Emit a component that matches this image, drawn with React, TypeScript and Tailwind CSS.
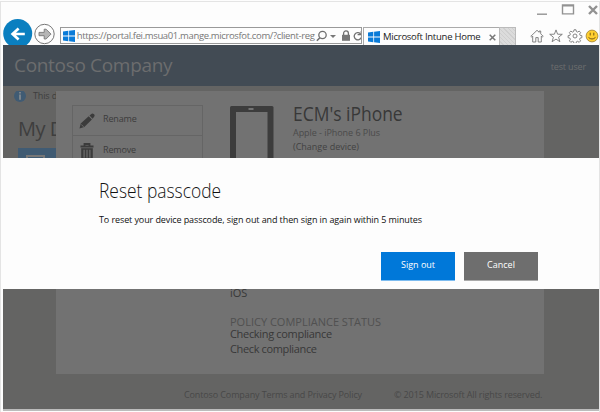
import React from "react";

const WindowsLogo = () => (
  <svg width="12" height="12" viewBox="0 0 12 12" className="shrink-0" fill="#0a7bd8">
    <path d="M0 1.5 5.3.8v4.8H0zM6.1.7 12 0v5.6H6.1zM0 6.4h5.3v4.8L0 10.5zM6.1 6.4H12V12l-5.9-.8z" />
  </svg>
);

const BackForward = () => (
  <svg width="57" height="28" viewBox="0 0 57 28" className="shrink-0">
    <circle cx="14.7" cy="14.5" r="14.5" fill="#0a7fc0" />
    <path d="M21.8 15h-11M15.6 9.4 9.6 15l6 5.6" fill="none" stroke="#fff" strokeWidth="2.7" />
    <circle cx="41.5" cy="15" r="9.7" fill="#fdfdfd" stroke="#777" strokeWidth="1" />
    <path d="M36 13.4h5.2v-3.2h1.9l4.9 4.9-4.9 4.9h-1.9v-3.3H36z" fill="#b5b5b5" stroke="#777" strokeWidth=".9" />
  </svg>
);

const WindowControls = () => (
  <svg width="64" height="14" viewBox="0 0 64 14" fill="none" stroke="#929292" className="shrink-0">
    <path d="M2 12.2h10" strokeWidth="1.4" />
    <path d="M27.5 3.7h11v8.2h-11zM26.8 3h12.4" strokeWidth="1.4" />
    <path d="m54 4 8 8m0-8-8 8" strokeWidth="2.4" />
  </svg>
);

const AddressTools = () => (
  <svg width="48" height="15" viewBox="0 0 48 15" fill="none" stroke="#707070" className="shrink-0">
    <circle cx="6.5" cy="7" r="3.7" strokeWidth="1.3" />
    <path d="m3.9 9.7-3 3" strokeWidth="1.6" />
    <path d="M14 7h6l-3 3z" fill="#777" stroke="none" />
    <path d="M26 6.8h8v6h-8z" fill="#777" stroke="none" />
    <path d="M27.6 7V5.3a2.4 2.4 0 0 1 4.8 0V7" strokeWidth="1.3" />
    <path d="M44.4 5.7A3.6 3.6 0 1 0 45.2 9.5M45.3 3v3.6h-3.7" strokeWidth="1.3" />
  </svg>
);

const BrowserIcons = () => (
  <svg width="69" height="14" viewBox="0 0 69 14" fill="none" stroke="#777" strokeWidth=".9" className="shrink-0">
    <path d="M.8 7.3 7 1.3l2.2 2V2h1.5v2.8l2.5 2.5-.9.8-1-1V13H8.2V8.6H5.8V13H2.7V7.1l-1 1z" />
    <path d="m26 .9 1.6 4.3 4.7.1-3.7 2.9 1.3 4.5L26 10.1l-3.9 2.6 1.3-4.5-3.7-2.9 4.7-.1z" />
    <circle cx="45" cy="7" r="2" />
    <path d="m44 .8 2 0 .4 1.8 1.2.5 1.6-1 1.4 1.4-1 1.6.5 1.2 1.8.4v2l-1.8.4-.5 1.2 1 1.6-1.4 1.4-1.6-1-1.2.5-.4 1.7h-2l-.4-1.7-1.2-.5-1.6 1-1.4-1.4 1-1.6-.5-1.2-1.8-.4v-2l1.8-.4.5-1.2-1-1.6 1.4-1.4 1.6 1 1.2-.5z" />
    <circle cx="62" cy="7" r="5.9" fill="#ffcf2f" stroke="#a98a3a" />
    <path d="M60.2 3.7v2.8M63.8 3.7v2.8M58.5 8.4q3.5 3.2 7 0" stroke="#765812" strokeWidth="1" />
  </svg>
);

const Pencil = () => (
  <svg width="16" height="16" viewBox="0 0 16 16" fill="#3b3b3b" className="shrink-0">
    <path d="M.5 15.5 1.7 10.6 9.7 3.3l3.2 3.3-7.6 7.5zM10.5 2.6 12.7.7q1-.7 2 .2l.6.7q.7.9 0 1.8L13.6 5.8z" />
    <path d="m2.2 11.4 2.5 2.5" stroke="#727272" strokeWidth=".8" />
  </svg>
);

const Trash = () => (
  <svg width="14" height="17" viewBox="0 0 14 17" fill="none" stroke="#3b3b3b" className="shrink-0">
    <path d="M.5 3.5h13M4.5 3V1h5v2" strokeWidth="1.8" />
    <path d="M1.2 5.2h11.6v11H1.2z" fill="#3b3b3b" stroke="none" />
    <path d="M4.1 6.8v8M7 6.8v8M9.9 6.8v8" stroke="#727272" strokeWidth="1.1" />
  </svg>
);

const Phone = () => (
  <svg width="44" height="80" viewBox="0 0 44 80" className="shrink-0">
    <rect width="43.5" height="80" rx="1.5" fill="#3c3c3c" />
    <rect x="6" y="6" width="31.5" height="68" fill="#727272" />
    <rect x="18.5" y="2.3" width="5" height="1.4" fill="#8a8a8a" />
  </svg>
);

function BrowserChrome() {
  return (
    <div className="h-[43px] bg-[#fdfdfd] text-[#333]">
      <div className="flex h-[17px] justify-end">
        <WindowControls />
      </div>
      <div className="flex h-[26px]">
        <div className="h-[27px] w-[57px] overflow-hidden">
          <BackForward />
        </div>
        <div className="mt-2 flex h-[17px] w-[303px] items-center overflow-hidden border border-[#999] pl-[2px]">
          <WindowsLogo />
          <span className="ml-0.5 w-[239px] shrink-0 whitespace-nowrap text-[9.5px] leading-3 tracking-[-0.36px] text-[#777]">
            https://portal.fei.msua01.mange.microsfot.com/?client-reg
          </span>
          <AddressTools />
        </div>
        <div className="ml-px mt-2 flex h-[18px] w-[136px] shrink-0 items-center border-l border-t border-[#aaa] pl-1">
          <WindowsLogo />
          <span className="ml-[3px] w-[106px] shrink-0 whitespace-nowrap text-[9.5px] leading-3 tracking-[-0.25px] text-[#222]">
            Microsoft Intune Home
          </span>
          <svg width="7" height="7" viewBox="0 0 7 7" stroke="#777" strokeWidth="1.5" className="mt-0.5 shrink-0">
            <path d="m.7.7 5.6 5.6m0-5.6L.7 6.3" />
          </svg>
        </div>
        <div className="mt-2 h-[18px] w-[17px] shrink-0 border border-b-0 border-[#bbb] bg-[repeating-linear-gradient(45deg,#dcdcdc_0_2px,#cfcfcf_2px_3px)]" />
        <div className="ml-3.5 mt-2.5 shrink-0">
          <BrowserIcons />
        </div>
      </div>
    </div>
  );
}

function DevicePanel() {
  return (
    <section className="flex h-[283px] w-[488px] bg-[#727272] pl-4 pt-[14px]">
      <div className="h-[120px] w-[131px] border border-[#656565] text-[9px] tracking-[-0.15px] text-[#3c3c3c]">
        <div className="flex h-[30px] items-center border-b border-[#656565] pl-1.5">
          <Pencil />
          <span className="ml-2 -mt-1">Rename</span>
        </div>
        <div className="flex h-[30px] items-center pl-[7px]">
          <Trash />
          <span className="-mt-0.5 ml-[9px]">Remove</span>
        </div>
      </div>
      <div className="ml-[27px] flex flex-col">
        <div className="flex h-[180px] pt-px">
          <Phone />
          <div className="ml-[19px] whitespace-nowrap">
            <h2 className="-mt-[3px] origin-left scale-x-[.895] text-[19.5px] leading-[22px] text-[#383838]">ECM's iPhone</h2>
            <p className="mt-px text-[9px] leading-[14px] tracking-[-0.05px] text-[#4a4a4a]">Apple - iPhone 6 Plus</p>
            <p className="text-[9px] leading-[14px] text-[#424242]">(Change device)</p>
          </div>
        </div>
        <div className="whitespace-nowrap text-[11px] text-[#383838]">
          <p className="leading-[16px]">iOS</p>
          <p className="mt-[13px] leading-[16px] text-[#505050]">POLICY COMPLIANCE STATUS</p>
          <p className="-mt-0.5 leading-[12px] tracking-[-0.32px]">Checking compliance</p>
          <p className="mt-px leading-[16px] tracking-[-0.36px]">Check compliance</p>
        </div>
      </div>
    </section>
  );
}

function ResetDialog() {
  return (
    <div role="dialog" className="absolute inset-x-0 top-[113px] h-[131px] bg-[#fdfdfd] pl-24 pr-[61px] pt-5 text-[#111]">
      <h1 className="origin-left scale-x-[.87] whitespace-nowrap text-[20px] font-light leading-[26px]">Reset passcode</h1>
      <p className="mt-[9px] whitespace-nowrap text-[9px] leading-[14px] tracking-[-0.1px]">
        To reset your device passcode, sign out and then sign in again within 5 minutes
      </p>
      <div className="mt-[25px] flex justify-end gap-[9px] text-[9px] text-white">
        <button className="h-[29px] w-[74px] border-b border-[#7dbcf0] bg-[#0078d9] pb-0.5">Sign out</button>
        <button className="h-[29px] w-[74px] border-b border-[#aaa] bg-[#6e6e6e] pb-0.5">Cancel</button>
      </div>
    </div>
  );
}

export default function App() {
  return (
    <div className="h-[412px] w-[600px] overflow-hidden bg-[#fdfdfd] pt-px font-['Open_Sans','Noto_Sans',sans-serif]">
      <div className="h-[411px] border-x border-t border-[#e4e4e4] pl-0.5">
        <BrowserChrome />
        <main className="relative flex h-[364px] w-[596px] flex-col bg-[#646463]">
          <header className="flex h-[41px] shrink-0 items-center justify-between bg-[#424b54] pl-[11px] pr-[13px] text-[#6c6d6e]">
            <span className="text-[19px] tracking-[-0.32px]">Contoso Company</span>
            <span className="mt-0.5 text-[9px] tracking-[-0.15px]">test user</span>
          </header>
          <div className="mt-[5px] flex">
            <aside className="h-[283px] w-[53px] shrink-0 overflow-hidden whitespace-nowrap text-[#3e3e3e]">
              <div className="-mt-px flex items-center pl-[11px]">
                <svg width="12" height="12" viewBox="0 0 12 12" className="shrink-0">
                  <circle cx="6" cy="6" r="6" fill="#405b73" />
                  <path d="M6 2v1.6M6 4.5v5.2" stroke="#8a8e91" strokeWidth="1.6" />
                </svg>
                <span className="ml-[7px] text-[9px] leading-3 tracking-[-0.15px]">This d</span>
              </div>
              <div className="ml-[15px] mt-[15px] text-[20px] leading-6 tracking-[-0.5px]">My D</div>
              <div className="ml-[15px] mt-[7px] h-16 bg-[#405b73] pl-2 pt-[7px]">
                <div className="h-[50px] w-[19px] border-2 border-[#777]" />
              </div>
            </aside>
            <DevicePanel />
          </div>
          <footer className="flex whitespace-nowrap pl-[181px] pt-[13px] text-[9px] leading-[16px] tracking-[-0.12px] text-[#484848]">
            <span className="w-[210px]">Contoso Company Terms and Privacy Policy</span>
            <span>© 2015 Microsoft All rights reserved.</span>
          </footer>
          <ResetDialog />
        </main>
        <div className="h-0.5 w-[596px] bg-[#bcbcbc]" />
      </div>
    </div>
  );
}
